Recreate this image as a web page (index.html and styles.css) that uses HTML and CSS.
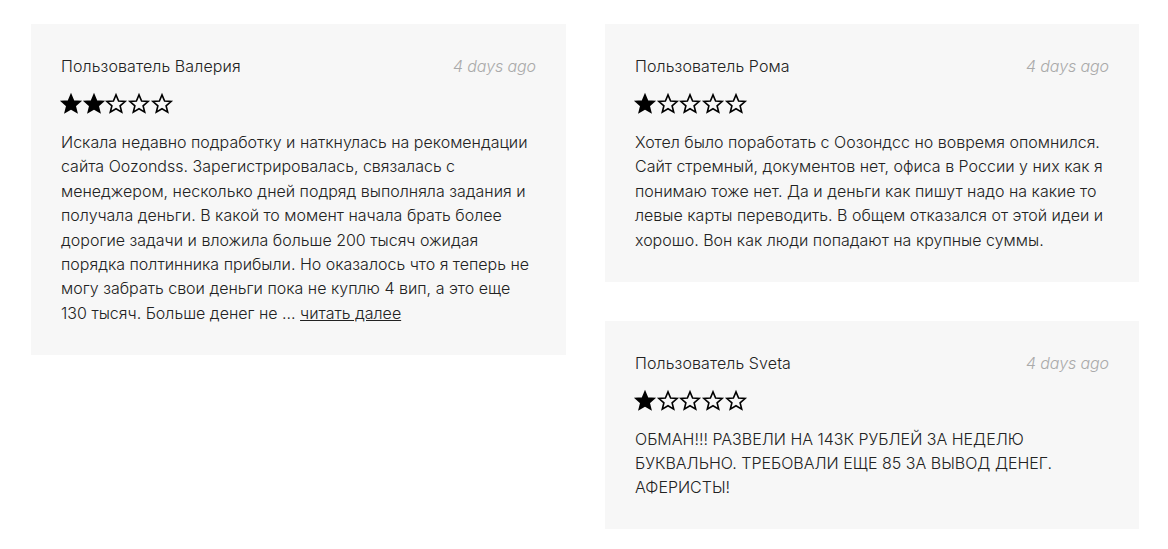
FILE: index.html
```html
<!DOCTYPE html>
<html lang="ru">
<head>
<meta charset="utf-8">
<link rel="stylesheet" href="styles.css">
</head>
<body>
<svg width="0" height="0" class="defs">
  <defs>
    <path id="star" d="M10 0.9 L12.6 7.0 L19.1 7.5 L14.1 11.8 L15.7 18.2 L10 14.8 L4.3 18.2 L5.9 11.8 L0.9 7.5 L7.4 7.0 Z"/>
  </defs>
</svg>
<div class="grid">
  <div class="col">
    <div class="card">
      <div class="head"><span class="name">Пользователь Валерия</span><span class="date">4 days ago</span></div>
      <div class="stars">
        <svg class="star full" viewBox="0 0 20 20"><use href="#star"/></svg>
        <svg class="star full" viewBox="0 0 20 20"><use href="#star"/></svg>
        <svg class="star" viewBox="0 0 20 20"><use href="#star"/></svg>
        <svg class="star" viewBox="0 0 20 20"><use href="#star"/></svg>
        <svg class="star" viewBox="0 0 20 20"><use href="#star"/></svg>
      </div>
      <p class="text">Искала недавно подработку и наткнулась на рекомендации сайта Oozondss. Зарегистрировалась, связалась с менеджером, несколько дней подряд выполняла задания и получала деньги. В какой то момент начала брать более дорогие задачи и вложила больше 200 тысяч ожидая порядка полтинника прибыли. Но оказалось что я теперь не могу забрать свои деньги пока не куплю 4 вип, а это еще 130 тысяч. Больше денег не ...&nbsp;<a class="more" href="#">читать далее</a></p>
    </div>
  </div>
  <div class="col">
    <div class="card">
      <div class="head"><span class="name">Пользователь Рома</span><span class="date">4 days ago</span></div>
      <div class="stars">
        <svg class="star full" viewBox="0 0 20 20"><use href="#star"/></svg>
        <svg class="star" viewBox="0 0 20 20"><use href="#star"/></svg>
        <svg class="star" viewBox="0 0 20 20"><use href="#star"/></svg>
        <svg class="star" viewBox="0 0 20 20"><use href="#star"/></svg>
        <svg class="star" viewBox="0 0 20 20"><use href="#star"/></svg>
      </div>
      <p class="text">Хотел было поработать с Оозондсс но вовремя опомнился. Сайт стремный, документов нет, офиса в России у них как я понимаю тоже нет. Да и деньги как пишут надо на какие то левые карты переводить. В общем отказался от этой идеи и хорошо. Вон как люди попадают на крупные суммы.</p>
    </div>
    <div class="card">
      <div class="head"><span class="name">Пользователь Sveta</span><span class="date">4 days ago</span></div>
      <div class="stars">
        <svg class="star full" viewBox="0 0 20 20"><use href="#star"/></svg>
        <svg class="star" viewBox="0 0 20 20"><use href="#star"/></svg>
        <svg class="star" viewBox="0 0 20 20"><use href="#star"/></svg>
        <svg class="star" viewBox="0 0 20 20"><use href="#star"/></svg>
        <svg class="star" viewBox="0 0 20 20"><use href="#star"/></svg>
      </div>
      <p class="text">ОБМАН!!! РАЗВЕЛИ НА 143К РУБЛЕЙ ЗА НЕДЕЛЮ БУКВАЛЬНО. ТРЕБОВАЛИ ЕЩЕ 85 ЗА ВЫВОД ДЕНЕГ. АФЕРИСТЫ!</p>
    </div>
  </div>
</div>
</body>
</html>
```
FILE: styles.css
```css
html, body {
  margin: 0;
  padding: 0;
  background: #fff;
}
body {
  font-family: Inter, "Noto Sans", sans-serif;
  font-size: 16px;
  color: #222;
}
.defs {
  position: absolute;
  width: 0;
  height: 0;
}
.grid {
  display: grid;
  grid-template-columns: 535px 534px;
  column-gap: 39px;
  padding: 24px 0 0 31px;
  align-items: start;
}
.col {
  display: flex;
  flex-direction: column;
  gap: 39px;
}
.card {
  background: #f7f7f7;
  padding: 30px 30px 29.5px 30px;
}
.head {
  display: flex;
  justify-content: space-between;
  line-height: 24px;
}
.name {
  font-weight: 300;
  color: #222;
  letter-spacing: 0.1px;
}
.date {
  font-style: italic;
  font-weight: 300;
  color: #aaa;
  letter-spacing: -0.1px;
}
.stars {
  display: flex;
  gap: 2.7px;
  margin-top: 16px;
  height: 20px;
  align-items: center;
}
.star {
  width: 20px;
  height: 20px;
  fill: none;
  stroke: #000;
  stroke-width: 1.6;
  stroke-linejoin: miter;
  overflow: visible;
}
.star.full {
  fill: #000;
}
.text {
  margin: 16px 0 0 0;
  line-height: 24.4px;
  font-weight: 300;
}
.more {
  color: #222;
  text-decoration: underline;
}
```
